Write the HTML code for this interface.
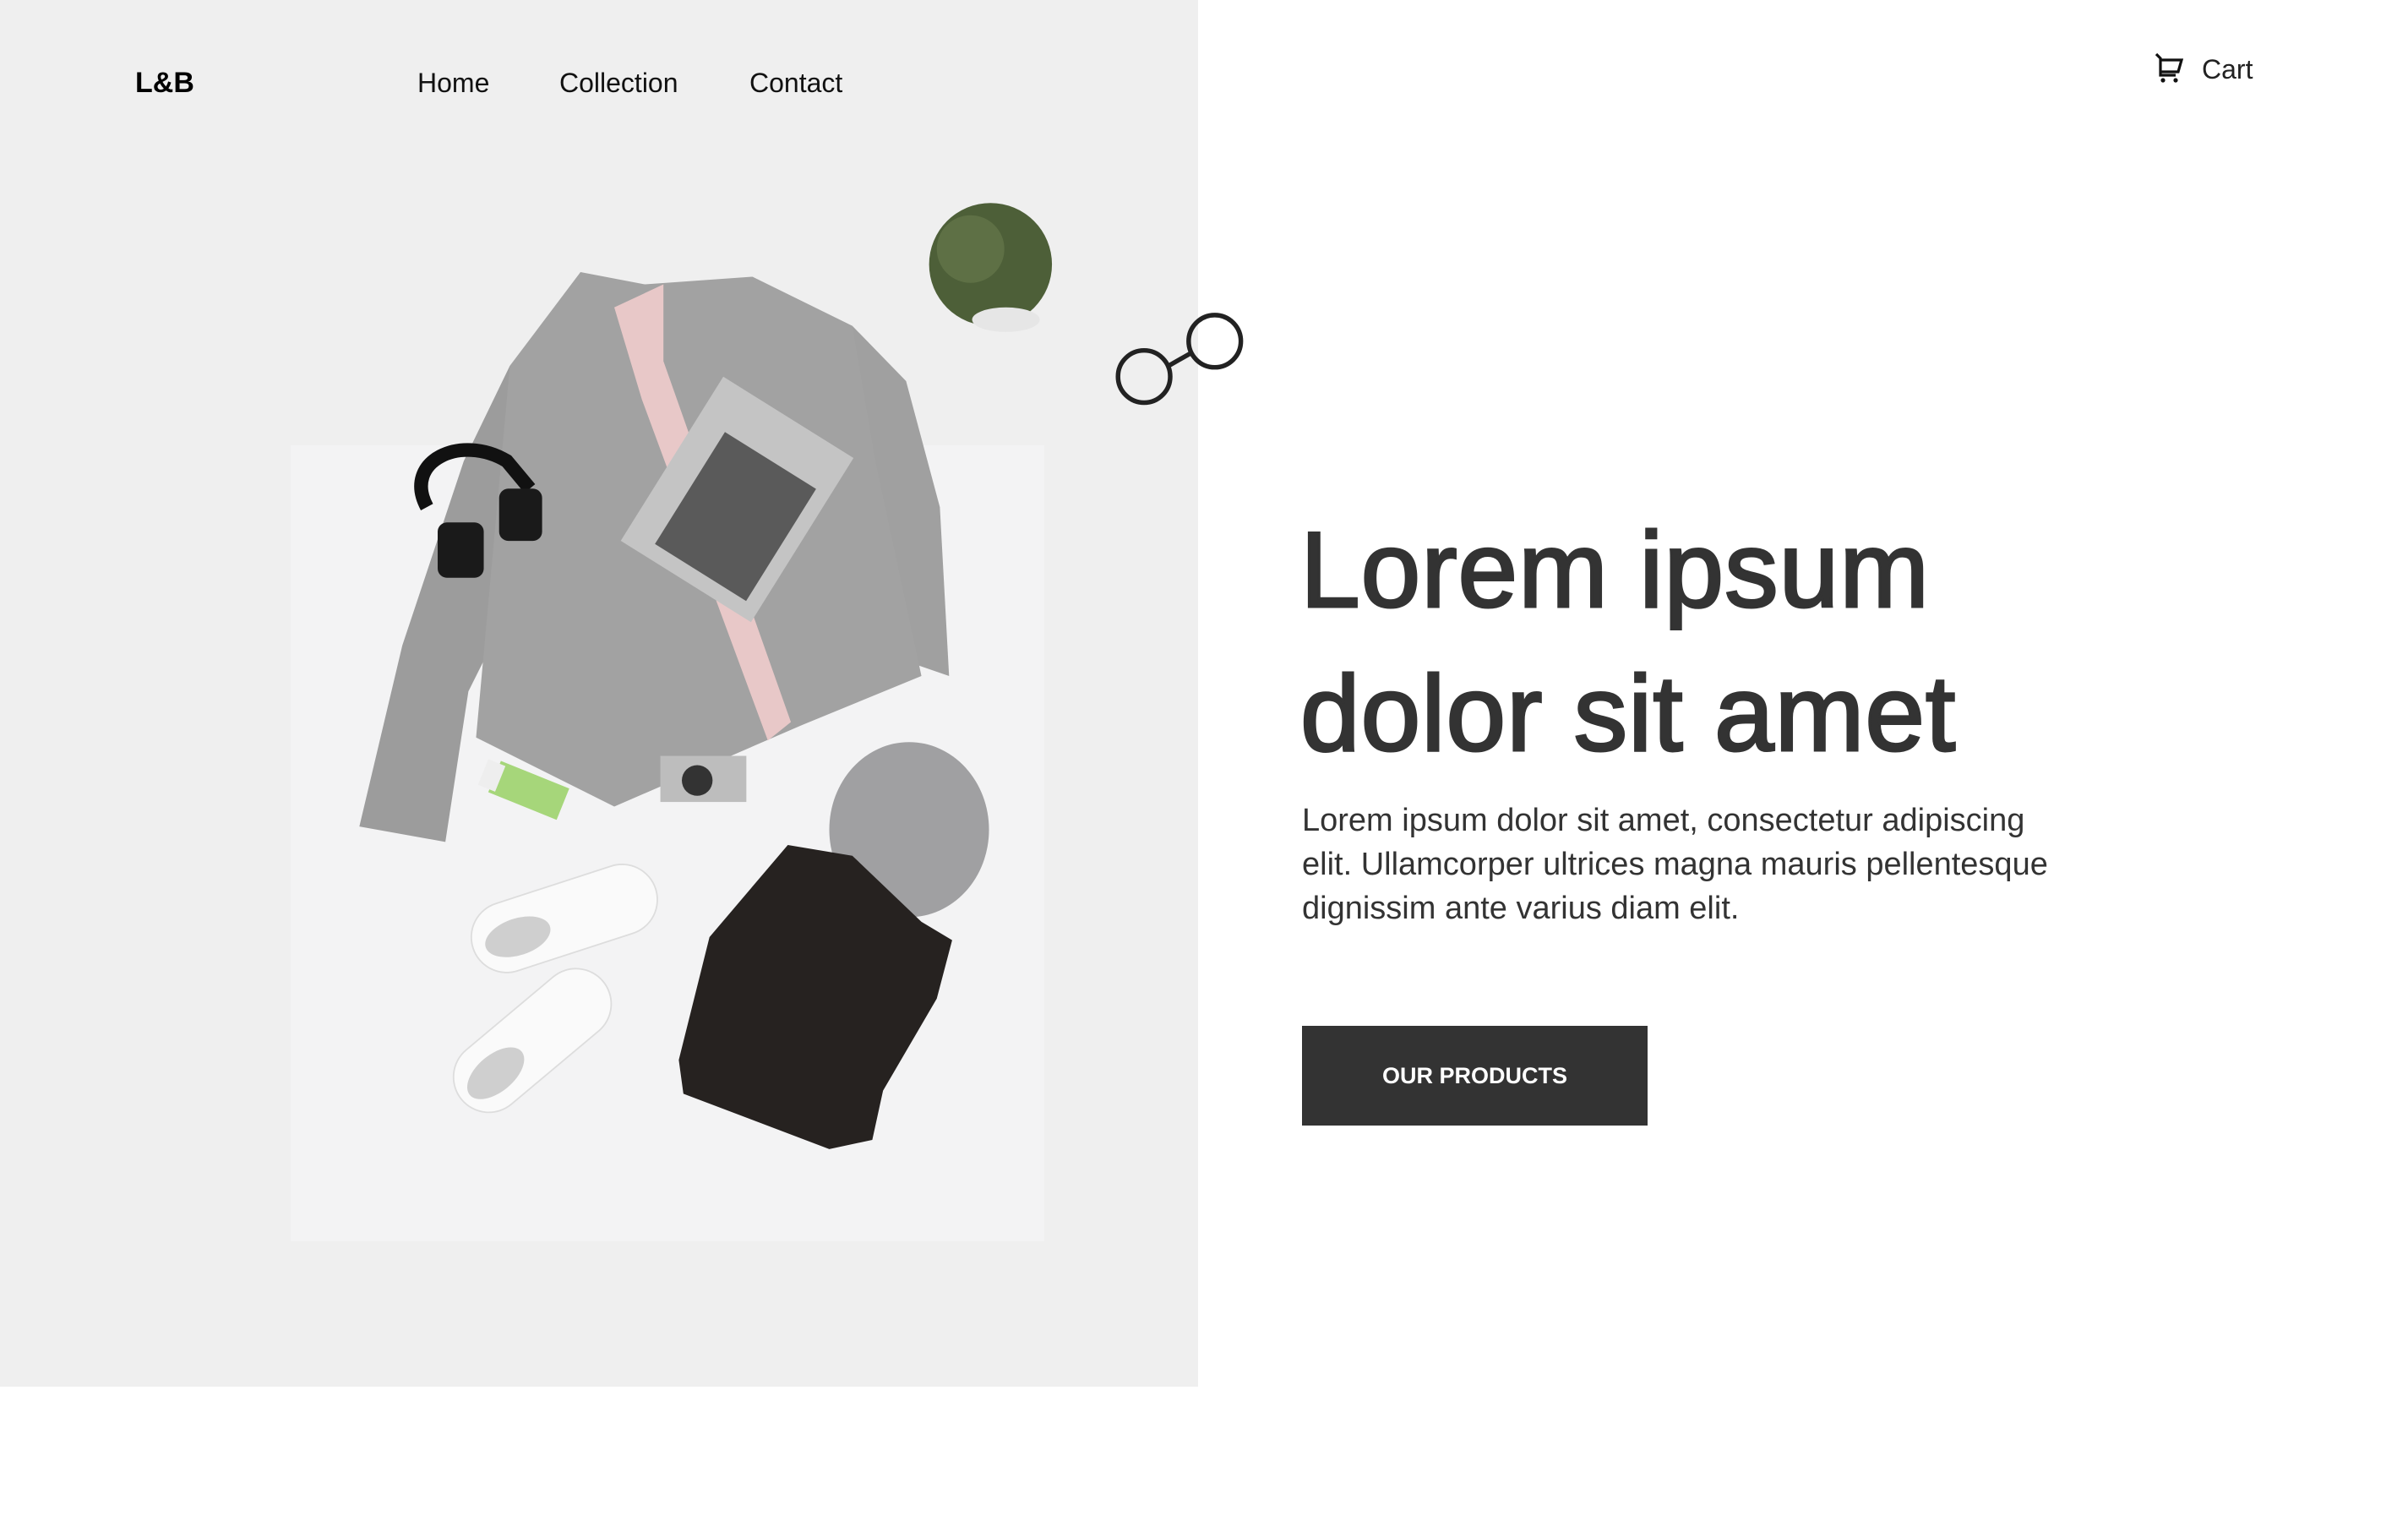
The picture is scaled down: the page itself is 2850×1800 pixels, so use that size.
<!DOCTYPE html>
<html><head><meta charset="utf-8"><style>
html,body{margin:0;padding:0;width:2850px;height:1800px;background:#fff;overflow:hidden;position:relative;font-family:"Liberation Sans",sans-serif}
.panel{position:absolute;left:0;top:0;width:1418px;height:1641px;background:#efefef}
.photo{position:absolute;left:344px;top:527px;width:892px;height:942px;background:#f3f3f4}
svg.art{position:absolute;left:0;top:0}
.logo{position:absolute;left:160px;top:79px;font-size:34px;font-weight:bold;color:#000}
.nav{position:absolute;top:80px;font-size:32px;color:#111}
.cart{position:absolute;left:2606px;top:64px;font-size:32px;color:#222}
h1{position:absolute;left:1539px;top:589px;margin:0;font-size:127px;line-height:170px;font-weight:normal;color:#333;letter-spacing:1px;-webkit-text-stroke:3px #333}
p{position:absolute;left:1541px;top:945px;margin:0;font-size:38px;line-height:52px;color:#333;white-space:nowrap}
.btn{position:absolute;left:1541px;top:1214px;width:409px;height:118px;background:#333;color:#fff;font-size:27px;line-height:118px;text-align:center;font-weight:bold}
</style></head><body>
<div class="panel"></div>
<div class="photo"></div>
<svg class="art" width="2850" height="1800" viewBox="0 0 1568 990">
 <!-- plant -->
 <circle cx="645" cy="172" r="40" fill="#4d5f38"/>
 <circle cx="632" cy="162" r="22" fill="#5e7045"/>
 <ellipse cx="655" cy="208" rx="22" ry="8" fill="#e6e6e6"/>
 <!-- glasses -->
 <circle cx="745" cy="245" r="17" fill="none" stroke="#222" stroke-width="3"/>
 <circle cx="791" cy="222" r="17" fill="none" stroke="#222" stroke-width="3"/>
 <line x1="761" y1="238" x2="775" y2="230" stroke="#222" stroke-width="3"/>
 <!-- jacket sleeves -->
 <polygon points="332,238 302,300 262,420 234,538 290,548 305,450 345,370" fill="#9c9c9c"/>
 <polygon points="555,212 590,248 612,330 618,440 560,420 552,350" fill="#a0a0a0"/>
 <!-- jacket body -->
 <polygon points="332,238 378,177 420,185 490,180 555,212 570,300 600,440 522,472 400,525 310,480" fill="#a2a2a2"/>
 <polygon points="400,200 432,185 432,235 515,470 500,482 418,260" fill="#e8c8c8"/>
 <!-- magazine -->
 <g transform="rotate(32 480 325)"><rect x="430" y="262" width="100" height="126" fill="#c4c4c4"/><rect x="450" y="292" width="70" height="86" fill="#5a5a5a"/></g>
 <!-- headphones -->
 <path d="M278 330 C262 300 300 282 330 300 L345 318" fill="none" stroke="#111" stroke-width="9"/>
 <rect x="285" y="340" width="30" height="36" rx="6" fill="#1a1a1a"/>
 <rect x="325" y="318" width="28" height="34" rx="6" fill="#1a1a1a"/>
 <!-- bottle -->
 <g transform="rotate(22 343 515)"><rect x="320" y="503" width="48" height="22" fill="#a6d67a"/><rect x="312" y="505" width="12" height="18" fill="#eee"/></g>
 <!-- camera -->
 <rect x="430" y="492" width="56" height="30" fill="#bdbdbd"/><circle cx="454" cy="508" r="10" fill="#333"/>
 <!-- cap -->
 <ellipse cx="592" cy="540" rx="52" ry="57" fill="#a0a0a2"/>
 <!-- pants -->
 <polygon points="513,550 555,557 600,600 620,612 610,650 575,710 568,742 540,748 445,712 442,690 462,610" fill="#262220"/>
 <!-- shoes -->
 <g transform="rotate(-18 367 598)"><rect x="305" y="575" width="125" height="46" rx="23" fill="#fafafa" stroke="#ddd"/><ellipse cx="335" cy="600" rx="22" ry="12" fill="#cfcfcf"/></g>
 <g transform="rotate(-40 345 680)"><rect x="288" y="656" width="120" height="46" rx="23" fill="#fafafa" stroke="#ddd"/><ellipse cx="316" cy="680" rx="22" ry="12" fill="#cfcfcf"/></g>
</svg>
<div class="logo">L&amp;B</div>
<div class="nav" style="left:494px">Home</div>
<div class="nav" style="left:662px">Collection</div>
<div class="nav" style="left:887px">Contact</div>
<svg style="position:absolute;left:2548px;top:60px" width="40" height="40" viewBox="0 0 40 40"><path d="M4 4 L9 9 L9 29 L27 29 M9 11 L34 11 L30 25 L9 25" fill="none" stroke="#111" stroke-width="3.2"/><circle cx="12" cy="35" r="2.6" fill="#111"/><circle cx="27" cy="35" r="2.6" fill="#111"/></svg>
<div class="cart">Cart</div>
<h1>Lorem ipsum<br>dolor sit amet</h1>
<p>Lorem ipsum dolor sit amet, consectetur adipiscing<br>elit. Ullamcorper ultrices magna mauris pellentesque<br>dignissim ante varius diam elit.</p>
<div class="btn">OUR PRODUCTS</div>
</body></html>
